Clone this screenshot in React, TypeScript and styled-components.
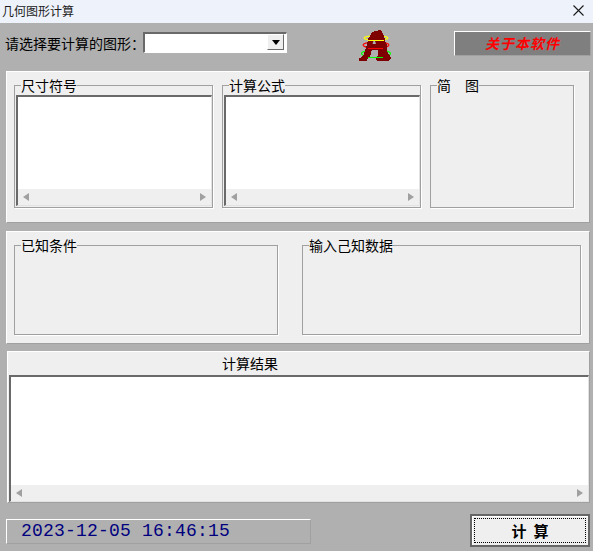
import React from 'react';
import styled, { createGlobalStyle } from 'styled-components';

const GlobalStyle = createGlobalStyle`
  html, body {
    margin: 0;
    padding: 0;
    background: #b0b0b0;
  }
  * {
    box-sizing: border-box;
  }
`;

const cjk = `"Noto Sans CJK SC", "Liberation Sans", sans-serif`;

const Window = styled.div`
  width: 593px;
  height: 551px;
  overflow: hidden;
  display: flex;
  flex-direction: column;
  background: #b0b0b0;
  font-family: ${cjk};
  color: #000;
`;

const TitleBar = styled.div`
  height: 23px;
  flex: none;
  background: #edf2fb;
  display: flex;
  align-items: center;
  justify-content: space-between;
  padding: 0 8px 2px 2px;
  font-size: 12px;
  color: #1a1a1a;
`;

const Toolbar = styled.div`
  height: 48px;
  flex: none;
  display: flex;
  align-items: flex-start;
  padding: 8px 2px 0 6px;
`;

const ComboLabel = styled.span`
  width: 137px;
  margin-left: -1px;
  margin-right: 1px;
  font-size: 14px;
  line-height: 18px;
  margin-top: 3px;
  white-space: nowrap;
`;

const Combo = styled.div`
  width: 144px;
  height: 21px;
  margin-top: 1px;
  background: #fff;
  border-style: solid;
  border-width: 2px 1px 1px 2px;
  border-color: #696969 #fff #fff #696969;
  display: flex;
  justify-content: flex-end;
  padding-right: 2px;
`;

const ComboButton = styled.div`
  width: 17px;
  height: 16px;
  background: #efefef;
  border: 1px solid;
  border-color: #fff #696969 #696969 #fff;
  display: flex;
  align-items: center;
  justify-content: center;
`;

const Logo = styled.svg`
  width: 36px;
  height: 36px;
  margin: -3px 60px 0 71px;
  flex: none;
`;

const AboutButton = styled.div`
  width: 137px;
  height: 25px;
  background: #7f7f7f;
  border-style: solid;
  border-width: 1px;
  border-color: #fff #a0a0a0 #a0a0a0 #fff;
  color: #f00;
  font-size: 14px;
  font-weight: 700;
  font-style: italic;
  line-height: 22px;
  letter-spacing: 1px;
  text-align: center;
  font-family: "Noto Sans CJK SC", serif;
`;

const Panel = styled.div<{ $height: number; $left?: number }>`
  height: ${(p) => p.$height}px;
  flex: none;
  margin: 0 3px 0 ${(p) => p.$left ?? 6}px;
  background: #efefef;
  border-style: solid;
  border-width: 1px;
  border-color: #fff #a0a0a0 #a0a0a0 #fff;
`;

const GroupRow = styled.div<{ $gap: number }>`
  display: flex;
  gap: ${(p) => p.$gap}px;
  padding: 6px 0 0 7px;
`;

const Group = styled.fieldset<{ $width: number; $height: number }>`
  width: ${(p) => p.$width}px;
  height: ${(p) => p.$height}px;
  margin: 0;
  padding: 0 0 0 1px;
  min-width: 0;
  flex: none;
  border: 1px solid #a0a0a0;
  box-shadow: 1px 1px 0 #fff;
`;

const Legend = styled.legend`
  margin-left: 5px;
  padding: 0;
  font-size: 14px;
  line-height: 15px;
  height: 14px;
  white-space: nowrap;
`;

const ListBox = styled.div`
  margin-top: 3px;
  height: 111px;
  display: flex;
  flex-direction: column;
  background: #fff;
  border-style: solid;
  border-width: 2px 1px 1px 2px;
  border-color: #696969 #e2e2e2 #e2e2e2 #696969;
`;

const TextArea = styled.div`
  flex: 1;
  background: #fff;
`;

const ScrollBar = styled.div`
  height: 16px;
  flex: none;
  background: #efefef;
  display: flex;
  align-items: center;
  justify-content: space-between;
  padding: 0 5px 0 5px;
`;

const Arrow = styled.span<{ $dir: 'left' | 'right' }>`
  width: 0;
  height: 0;
  border-style: solid;
  border-width: 4px 0 4px 6px;
  border-color: transparent transparent transparent #a0a0a0;
  transform: ${(p) => (p.$dir === 'left' ? 'scaleX(-1)' : 'none')};
`;

const Gap = styled.div<{ $size: number }>`
  height: ${(p) => p.$size}px;
  flex: none;
`;

const ResultTitle = styled.div`
  height: 23px;
  padding-left: 214px;
  font-size: 14px;
  line-height: 23px;
`;

const ResultBox = styled.div`
  height: 127px;
  margin-left: 1px;
  display: flex;
  flex-direction: column;
  background: #fff;
  border-style: solid;
  border-width: 2px 1px 1px 2px;
  border-color: #696969 #e2e2e2 #e2e2e2 #696969;
`;

const Footer = styled.div`
  flex: 1;
  display: flex;
  align-items: flex-start;
  justify-content: space-between;
  padding: 11px 3px 0 6px;
`;

const Clock = styled.div`
  width: 305px;
  height: 25px;
  margin-top: 5px;
  border-style: solid;
  border-width: 1px;
  border-color: #fff #a0a0a0 #a0a0a0 #fff;
  padding-left: 14px;
  font-family: "Liberation Mono", monospace;
  font-size: 18px;
  letter-spacing: 0.2px;
  line-height: 23px;
  color: #00007f;
  white-space: pre;
`;

const CalcButton = styled.button`
  width: 120px;
  height: 33px;
  padding: 2px;
  background: #efefef;
  border: 2px solid #666;
  font-family: ${cjk};
  font-size: 15px;
  font-weight: 700;
  display: flex;
  box-shadow: inset 1px 1px 0 #fff;
`;

const FocusRing = styled.span`
  flex: 1;
  border: 1px dotted #000;
  line-height: 23px;
  text-align: center;
  white-space: pre;
`;

function Scroller() {
  return (
    <ScrollBar>
      <Arrow $dir="left" />
      <Arrow $dir="right" />
    </ScrollBar>
  );
}

function App() {
  return (
    <Window>
      <GlobalStyle />
      <TitleBar>
        <span>几何图形计算</span>
        <svg width="13" height="13" viewBox="0 0 13 13">
          <path d="M1.5 1.5 L11.5 11.5 M11.5 1.5 L1.5 11.5" stroke="#1a1a1a" strokeWidth="1.1" fill="none" />
        </svg>
      </TitleBar>
      <Toolbar>
        <ComboLabel>请选择要计算的图形：</ComboLabel>
        <Combo>
          <ComboButton>
            <svg width="8" height="5" viewBox="0 0 8 5">
              <path d="M0 0 H8 L4 5 Z" fill="#000" />
            </svg>
          </ComboButton>
        </Combo>
        <Logo viewBox="0 0 36 36">
          <ellipse cx="18" cy="10" rx="12" ry="2.2" fill="none" stroke="#ffff00" strokeWidth="1.1" />
          <ellipse cx="18" cy="17" rx="13" ry="3" fill="none" stroke="#ff0000" strokeWidth="1.1" />
          <ellipse cx="18" cy="25.5" rx="14.5" ry="3.5" fill="none" stroke="#00ff00" strokeWidth="1.1" />
          <path d="M13.7 22 H20 L20.3 27 L18 29.3 L18.7 33 H8.7 L10.3 30.3 L12.7 27 Z" fill="#b0b0b0" />
          <path
            d="M13.7 4.7 L17 3 L23 2 L25.3 6 L27 12 L28.7 17 L29.3 23.7 L32 28 L33.7 30.3 L30.3 32.7 L18.7 32.7 L18 29.3 L20.3 27 L20 22 L13.7 22 L12.7 27 L10.3 30.3 L8.7 32.7 L1.3 32.7 L1.3 30.3 L5.3 28 L7 22 L9.3 15.3 L10.3 10.3 L12.7 7 Z"
            fill="#7f0000"
            shapeRendering="crispEdges"
          />
          <path d="M15.5 13 L17 13 L18 16 L14.5 16 Z" fill="#b0b0b0" />
          <path d="M10 12.5 H26" stroke="#ffff00" strokeWidth="1" />
          <path d="M10 20.5 H25" stroke="#ff0000" strokeWidth="1" />
          <path d="M10 29.5 H25" stroke="#00ff00" strokeWidth="1" />
        </Logo>
        <AboutButton>关于本软件</AboutButton>
      </Toolbar>
      <Panel $height={152}>
        <GroupRow $gap={9}>
          <Group $width={199} $height={130}>
            <Legend>尺寸符号</Legend>
            <ListBox>
              <TextArea />
              <Scroller />
            </ListBox>
          </Group>
          <Group $width={199} $height={130}>
            <Legend>计算公式</Legend>
            <ListBox>
              <TextArea />
              <Scroller />
            </ListBox>
          </Group>
          <Group $width={144} $height={130}>
            <Legend>简　图</Legend>
          </Group>
        </GroupRow>
      </Panel>
      <Gap $size={8} />
      <Panel $height={113}>
        <GroupRow $gap={24}>
          <Group $width={264} $height={97}>
            <Legend>已知条件</Legend>
          </Group>
          <Group $width={279} $height={97}>
            <Legend>输入己知数据</Legend>
          </Group>
        </GroupRow>
      </Panel>
      <Gap $size={7} />
      <Panel $height={152} $left={7}>
        <ResultTitle>计算结果</ResultTitle>
        <ResultBox>
          <TextArea />
          <Scroller />
        </ResultBox>
      </Panel>
      <Footer>
        <Clock>2023-12-05 16:46:15</Clock>
        <CalcButton>
          <FocusRing>计  算</FocusRing>
        </CalcButton>
      </Footer>
    </Window>
  );
}

export default App;
